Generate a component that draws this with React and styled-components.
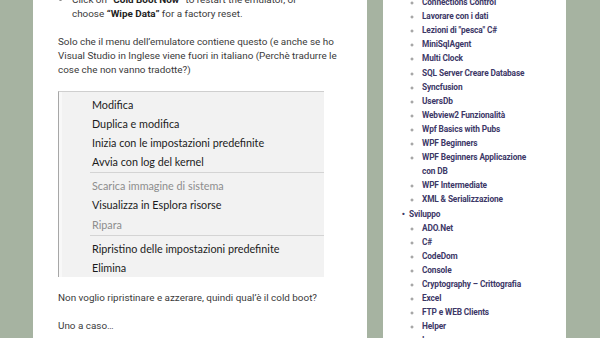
import styled, { createGlobalStyle } from "styled-components";

const GlobalStyle = createGlobalStyle`
  body {
    margin: 0;
    background: #a6b3a1;
    font-family: Roboto, "Liberation Sans", sans-serif;
  }
`;

const Page = styled.div`
  display: flex;
  gap: 16px;
  height: 338px;
  overflow: hidden;
  padding-left: 33px;
`;

const Main = styled.main`
  width: 334px;
  flex-shrink: 0;
  background: #fff;
  padding: 0 25px;
  box-sizing: border-box;
  color: #3a3a3a;
  font-size: 9.9px;
  line-height: 14px;
`;

const TopList = styled.ul`
  margin: -7px 0 0;
  padding-left: 14px;
  li::marker { color: #888; }
  b { color: #222; font-weight: 700; }
`;

const Para = styled.p`
  margin: 14px 0;
`;

const Shot = styled.div`
  width: 265px;
  margin: 13px 0;
  background: #f2f2f2;
  border-top: 1px solid #cfcfcf;
  border-left: 1px solid #a7a7a7;
  display: flex;
  font-family: Lato, "Noto Sans", sans-serif;
  font-size: 10.8px;
  color: #1b1b1b;
`;

const Gutter = styled.div`
  width: 28px;
  flex-shrink: 0;
  border-left: 3px solid #f8f8f8;
`;

const MenuBody = styled.div`
  flex: 1;
  padding: 2.5px 0 0;
`;

const MenuItem = styled.div`
  height: 19.1px;
  line-height: 19px;
  padding-left: 2px;
  white-space: nowrap;
  color: ${(p) => (p.disabled ? "#8d8d8d" : "#1b1b1b")};
`;

const MenuSep = styled.div`
  height: 1px;
  background: #d4d4d4;
  margin: 1.5px 0 3px;
`;

const Sidebar = styled.aside`
  width: 183px;
  flex-shrink: 0;
  background: #fff;
  padding: 0 28px 0 26px;
  box-sizing: border-box;
`;

const NavList = styled.ul`
  margin: 0;
  padding-left: 0;
  margin-top: -19px;
  list-style: disc;
  font-size: 8.3px;
  line-height: 14.1px;
  font-weight: 700;
  letter-spacing: -0.12px;
  color: #3d3867;
  & > li::marker {
    content: "•  ";
    color: #3d3867;
    font-size: 9px;
  }
`;

const SubList = styled.ul`
  margin: 0;
  padding-left: 13px;
  list-style: circle;
  & > li::marker {
    color: #8a8a8a;
    font-size: 7.5px;
  }
`;

const menu = [
  ["Modifica"],
  ["Duplica e modifica"],
  ["Inizia con le impostazioni predefinite"],
  ["Avvia con log del kernel"],
  null,
  ["Scarica immagine di sistema", true],
  ["Visualizza in Esplora risorse"],
  ["Ripara", true],
  null,
  ["Ripristino delle impostazioni predefinite"],
  ["Elimina"],
];

const before = [
  "Connections Control",
  "Lavorare con i dati",
  'Lezioni di "pesca" C#',
  "MiniSqlAgent",
  "Multi Clock",
  "SQL Server Creare Database",
  "Syncfusion",
  "UsersDb",
  "Webview2 Funzionalità",
  "Wpf Basics with Pubs",
  "WPF Beginners",
  "WPF Beginners Applicazione con DB",
  "WPF Intermediate",
  "XML & Serializzazione",
];

const sviluppo = [
  "ADO.Net",
  "C#",
  "CodeDom",
  "Console",
  "Cryptography – Crittografia",
  "Excel",
  "FTP e WEB Clients",
  "Helper",
  "Images",
];

export default function App() {
  return (
    <>
      <GlobalStyle />
      <Page>
        <Main>
          <TopList>
            <li>
              Click on <b>“Cold Boot Now”</b> to restart the emulator, or
              <br />
              choose <b>“Wipe Data”</b> for a factory reset.
            </li>
          </TopList>
          <Para>
            Solo che il menu dell’emulatore contiene questo (e anche se ho
            Visual Studio in Inglese viene fuori in italiano (Perchè tradurre le
            cose che non vanno tradotte?)
          </Para>
          <Shot>
            <Gutter />
            <MenuBody>
              {menu.map((m, i) =>
                m ? (
                  <MenuItem key={i} disabled={m[1]}>
                    {m[0]}
                  </MenuItem>
                ) : (
                  <MenuSep key={i} />
                )
              )}
            </MenuBody>
          </Shot>
          <Para>Non voglio ripristinare e azzerare, quindi qual’è il cold boot?</Para>
          <Para>Uno a caso…</Para>
        </Main>
        <Sidebar>
          <NavList>
            <li>
              Applicazioni
              <SubList>
                {before.map((t) => (
                  <li key={t}>{t}</li>
                ))}
              </SubList>
            </li>
            <li>
              Sviluppo
              <SubList>
                {sviluppo.map((t) => (
                  <li key={t}>{t}</li>
                ))}
              </SubList>
            </li>
          </NavList>
        </Sidebar>
      </Page>
    </>
  );
}
